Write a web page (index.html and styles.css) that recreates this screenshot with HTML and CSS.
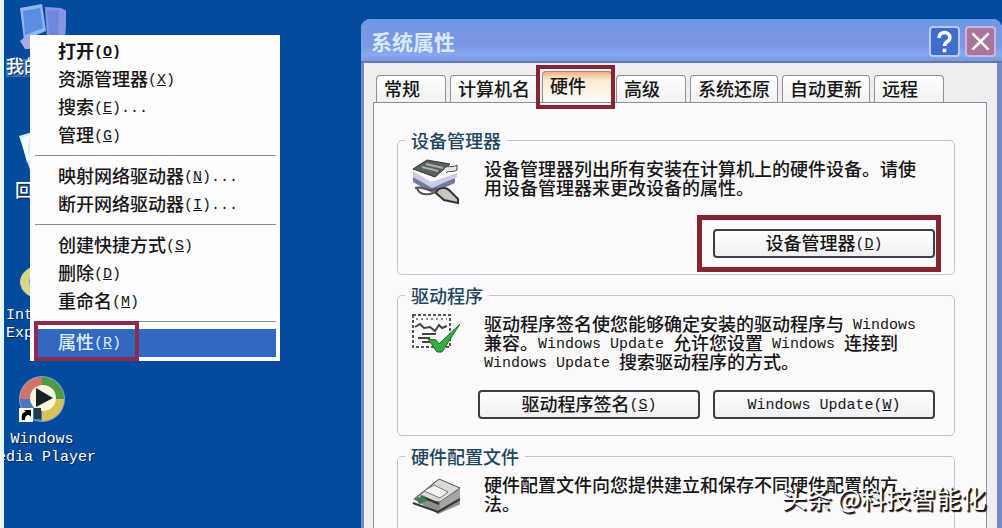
FILE: index.html
```
<!DOCTYPE html>
<html lang="zh-CN">
<head>
  <meta charset="UTF-8" />
  <meta name="viewport" content="width=device-width, initial-scale=1.0" />
  <title>系统属性</title>
  <link rel="stylesheet" href="styles.css">
</head>
<body>
<div class="desktop">
  <div class="icons">
    <div class="icon">
      <svg viewBox="0 0 48 48">
        <path d="M2 5 24 1l4 27-22 9z" fill="#8fb6f4"/>
        <path d="M5 8 22 5l3 20-18 7z" fill="#5a8ce0"/>
        <path d="M27 4l16 1 6 3-2 28-18-1z" fill="#8a94e4"/>
        <path d="M29 7l12 1-1 25-9-1z" fill="#6f86dd"/>
        <path d="M2 38l8-7 30 3-5 12-28 0z" fill="#a8a9e6"/>
      </svg>
      <span class="label active">我的电脑</span>
    </div>
    <div class="icon">
      <svg viewBox="0 0 48 48">
        <path d="M1 9l10-3 30 2-6 36-22 2z" fill="#cfeaf0"/>
        <path d="M3 11l9-3-2 12 2 12-3 4z" fill="#f4fdfd"/>
      </svg>
      <span class="label">回收站</span>
    </div>
    <div class="icon">
      <svg viewBox="0 0 48 48">
        <ellipse cx="24" cy="31" rx="22" ry="17" fill="#d8d68a"/>
        <ellipse cx="26" cy="31" rx="15" ry="11" fill="#5fa0df"/>
      </svg>
      <span class="label">Internet<br>Explorer</span>
    </div>
    <div class="icon">
      <svg viewBox="0 0 48 48">
        <circle cx="24" cy="24" r="23" fill="#7fa6c9"/>
        <path d="M24 24V2A22 22 0 0 0 2 24z" fill="#cf7468"/>
        <path d="M24 24h22A22 22 0 0 0 24 2z" fill="#4f9a45"/>
        <path d="M24 24v22a22 22 0 0 0 22-22z" fill="#d9c257"/>
        <path d="M24 24H2a22 22 0 0 0 22 22z" fill="#4f77b8"/>
        <circle cx="25" cy="23" r="13" fill="#f8f5dc"/>
        <path d="M18 13v19l17-9z" fill="#15202a"/>
        <path d="M16 33h7v11h-7z" fill="#26384a"/>
        <path d="M1 33h14v14H1z" fill="#fff"/>
        <path d="M4 45c-1-6 1-8 4-8l-2-2h7v7l-2-2c-3 0-4 2-4 5z" fill="#000"/>
      </svg>
      <span class="label">Windows<br>Media Player</span>
    </div>
  </div>

  <div class="menu" role="menu">
    <button class="item default" role="menuitem">打开<span class="key">(<u>O</u>)</span></button>
    <button class="item" role="menuitem">资源管理器<span class="key">(<u>X</u>)</span></button>
    <button class="item" role="menuitem">搜索<span class="key">(<u>E</u>)...</span></button>
    <button class="item" role="menuitem">管理<span class="key">(<u>G</u>)</span></button>
    <hr>
    <button class="item" role="menuitem">映射网络驱动器<span class="key">(<u>N</u>)...</span></button>
    <button class="item" role="menuitem">断开网络驱动器<span class="key">(<u>I</u>)...</span></button>
    <hr>
    <button class="item" role="menuitem">创建快捷方式<span class="key">(<u>S</u>)</span></button>
    <button class="item" role="menuitem">删除<span class="key">(<u>D</u>)</span></button>
    <button class="item" role="menuitem">重命名<span class="key">(<u>M</u>)</span></button>
    <hr>
    <button class="item selected" role="menuitem">属性<span class="key">(<u>R</u>)</span></button>
  </div>

  <div class="window">
    <div class="titlebar">
      <h1>系统属性</h1>
      <button class="caption help" aria-label="帮助">
        <svg viewBox="0 0 30 30"><path d="M9 11c0-8 12-8 12 0 0 4-6 4-6 9" fill="none" stroke="#fff" stroke-width="4"/><path d="M13 23h4v4h-4z" fill="#fff"/></svg>
      </button>
      <button class="caption close" aria-label="关闭">
        <svg viewBox="0 0 30 30"><path d="M6 6l18 18M24 6L6 24" stroke="#fff" stroke-width="3"/></svg>
      </button>
    </div>

    <div class="tabs" role="tablist">
      <button class="tab" role="tab">常规</button>
      <button class="tab" role="tab">计算机名</button>
      <button class="tab current" role="tab" aria-selected="true">硬件</button>
      <button class="tab" role="tab">高级</button>
      <button class="tab" role="tab">系统还原</button>
      <button class="tab" role="tab">自动更新</button>
      <button class="tab" role="tab">远程</button>
    </div>

    <div class="pane" role="tabpanel">
      <fieldset class="manager">
        <legend>设备管理器</legend>
        <div class="info">
          <svg viewBox="0 0 48 48">
            <path d="M1 15l18 12 24-8v5L20 34 1 23z" fill="#75799f"/>
            <path d="M1 12l18 11 26-9v4L20 29 1 18z" fill="#c9cde8"/>
            <path d="M1 10 15 1l23 4-15 13z" fill="#59615f" stroke="#333"/>
            <path d="M14 5l17 4M10 8l16 4" stroke="#a9b2ad" stroke-width="2"/>
            <path d="M32 10c3-5 7 0 13-4v5c-5 3-8 0-11 3" fill="#e8e8e8" stroke="#444"/>
            <path d="M3 29c8-3 14 6 22 0M5 29c2 8 14 8 22 2" fill="none" stroke="#555" stroke-width="2"/>
            <path d="M24 34c2-6 10-6 13-3l9 9v4l-14-3z" fill="#c4c8bd" stroke="#333" stroke-width="2"/>
          </svg>
          <p>设备管理器列出所有安装在计算机上的硬件设备。请使<br>用设备管理器来更改设备的属性。</p>
        </div>
        <div class="actions">
          <button class="btn marked">设备管理器<span class="key">(<u>D</u>)</span></button>
        </div>
      </fieldset>

      <fieldset>
        <legend>驱动程序</legend>
        <div class="info">
          <svg viewBox="0 0 48 48">
            <path d="M1 1h37v32H1z" fill="#fafafa" stroke="#555" stroke-width="2" stroke-dasharray="3 2"/>
            <path d="M4 5h31" stroke="#888" stroke-width="2" stroke-dasharray="2 3"/>
            <path d="M3 13l5-3 4 4 6-1 5 4 4-6 3 3 5-2" fill="none" stroke="#444" stroke-width="2"/>
            <path d="M10 20h14M6 24h12M10 28h10" stroke="#444" stroke-width="2"/>
            <path d="M16 25l8 1 3 4L48 10 30 38h-5z" fill="#39ad46" stroke="#176b27"/>
          </svg>
          <p>驱动程序签名使您能够确定安装的驱动程序与<span class="key"> Windows</span><br>兼容。<span class="key">Windows Update </span>允许您设置<span class="key"> Windows </span>连接到<br><span class="key">Windows Update </span>搜索驱动程序的方式。</p>
        </div>
        <div class="actions">
          <button class="btn">驱动程序签名<span class="key">(<u>S</u>)</span></button>
          <button class="btn"><span class="key">Windows Update(<u>W</u>)</span></button>
        </div>
      </fieldset>

      <fieldset>
        <legend>硬件配置文件</legend>
        <div class="info">
          <svg viewBox="0 0 48 48">
            <path d="M1 24 25 5l24 8v16L26 39z" fill="#8c908b"/>
            <path d="M3 24 27 4l21 9-20 14z" fill="#d9dcd5" stroke="#555"/>
            <path d="M12 16l16 7 8-6-14-7z" fill="#f4f4ee" stroke="#777"/>
            <path d="M9 21l18 8M1 28l25 9 22-13" stroke="#333" stroke-width="2" fill="none"/>
            <path d="M28 27l20-13v8L28 34z" fill="#a3a7a0"/>
            <path d="M4 23l8-2 3 5-8 3z" fill="#3f7d5c"/>
          </svg>
          <p>硬件配置文件向您提供建立和保存不同硬件配置的方<br>法。</p>
        </div>
      </fieldset>
    </div>
  </div>

  <div class="watermark">头条 @科技智能化</div>
</div>
</body>
</html>
```
FILE: styles.css
```
*,
*::after {
  box-sizing: border-box;
}

body {
  margin: 0;
  font-family: "Noto Sans CJK SC", sans-serif;
  font-size: 18px;
  font-weight: 500;
  color: #151515;
}

button {
  font: inherit;
  color: inherit;
  cursor: pointer;
}

.key {
  font-family: "Liberation Mono", monospace;
  font-size: 15px;
  line-height: 0;
  vertical-align: 2px;
}

.desktop {
  position: relative;
  display: grid;
  grid-template-columns: 357px 1fr;
  height: 100vh;
  overflow: hidden;
  background: #044b9d;
  border-left: 4px solid #e6f7fb;
}

/* desktop icons */
.icons {
  display: grid;
  grid-template-columns: 76px;
  grid-auto-rows: 124px;
  align-content: start;
  padding-top: 3px;
}

.icon {
  display: flex;
  flex-direction: column;
  align-items: center;
  gap: 8px;
}

.icon svg {
  width: 48px;
  height: 48px;
  flex: none;
}

.label {
  font-family: "Liberation Mono", "Noto Sans CJK SC", monospace;
  font-size: 15px;
  line-height: 18px;
  white-space: nowrap;
  text-align: center;
  color: #fff;
  text-shadow: 1px 1px 1px #00214d;
}

.icon:nth-child(-n+2) .label {
  font-size: 18px;
}

.label.active {
  background: #2f77b5;
}

/* context menu */
.menu {
  position: absolute;
  top: 35px;
  left: 26px;
  width: 250px;
  padding: 3px 4px 4px 8px;
  background: #fdfcfe;
}

.item {
  display: block;
  width: 100%;
  height: 28px;
  padding: 0 20px 3px;
  border: 0;
  background: none;
  line-height: 25px;
  text-align: left;
  white-space: nowrap;
}

.item.default {
  font-weight: 700;
}

.item.selected {
  position: relative;
  background: #3168c0;
  color: #dceeff;
}

.item.selected::after {
  content: "";
  position: absolute;
  inset: -8px auto -4px -4px;
  width: 105px;
  border: 4px solid #8c2a50;
}

.menu hr {
  height: 1px;
  margin: 5px 0 7px -3px;
  border: 0;
  background: #8f8a8c;
}

/* system properties window */
.window {
  display: flex;
  flex-direction: column;
  grid-column: 2;
  margin-top: 19px;
  border: solid #7089c9;
  border-width: 0 5px 0 3px;
  border-radius: 9px 9px 0 0;
  background: #eeeef0;
}

.icons,
.window {
  grid-row: 1;
}

.titlebar {
  display: flex;
  align-items: center;
  gap: 5px;
  height: 44px;
  margin: 0 -5px 0 -3px;
  padding: 2px 6px 0 10px;
  border-bottom: 2px solid #6078c4;
  border-radius: 9px 9px 0 0;
  background: linear-gradient(#6a9ae8, #7896e2 25%, #7b9ae6 65%, #85aaf0 85%, #7a96dc);
}

.titlebar h1 {
  flex: 1;
  margin: 0;
  font-size: 21px;
  font-weight: 700;
  line-height: 28px;
  color: #d8eafc;
}

.caption {
  width: 31px;
  height: 31px;
  padding: 0;
  border: 2px solid #b4ccf5;
  border-radius: 4px;
}

.caption svg {
  display: block;
  width: 100%;
}

.help {
  background: #426ccb;
}

.close {
  background: #a9759c;
  border-color: #c9b6dd;
}

.tabs {
  display: flex;
  align-items: flex-end;
  gap: 4px;
  height: 39px;
  padding: 0 12px;
}

.tab {
  min-width: 70px;
  height: 27px;
  padding: 0 7px 2px;
  border: 1px solid #8d9296;
  border-bottom: 0;
  border-radius: 4px 4px 0 0;
  background: linear-gradient(#fff, #f1f1f2);
  line-height: 24px;
  text-align: left;
  white-space: nowrap;
}

.tab.current {
  position: relative;
  height: 31px;
  padding-bottom: 5px;
  background: linear-gradient(#f3b283, #fdebd2 8px, #fdfbfa);
}

.tab.current::after {
  content: "";
  position: absolute;
  inset: -7px -4px -7px -7px;
  border: 4px solid #86252f;
}

.pane {
  flex: 1;
  margin: 0 10px 0 9px;
  padding: 28px 31px 30px 23px;
  border: 1px solid #8d9296;
  background: #fcfafc;
}

fieldset {
  min-width: 0;
  margin: 0 0 11px;
  padding: 10px 19px 16px 7px;
  border: 1px solid #c6c6ca;
  border-radius: 5px;
}

legend {
  padding: 0 6px;
  line-height: 18px;
  color: #1d4660;
}

.info {
  display: flex;
  gap: 24px;
  padding-left: 7px;
}

.info svg {
  flex: none;
  width: 48px;
  height: 48px;
}

.info p {
  margin: 0;
  line-height: 19px;
  white-space: nowrap;
}

.actions {
  display: flex;
  justify-content: flex-end;
  gap: 13px;
  margin-top: 19px;
}

.manager .actions {
  margin-top: 22px;
}

.btn {
  width: 222px;
  height: 29px;
  padding: 0 0 3px;
  border: 2px solid #3b3e46;
  border-radius: 4px;
  background: linear-gradient(#fff, #f0eff2);
  line-height: 22px;
}

.btn.marked {
  position: relative;
}

.btn.marked::after {
  content: "";
  position: absolute;
  inset: -16px -8px -16px -18px;
  border: 5px solid #86252f;
}

.watermark {
  position: absolute;
  right: 16px;
  bottom: 13px;
  font-size: 25px;
  font-weight: 400;
  line-height: 36px;
  color: #fff;
  text-shadow: 1px 1px 0 #111, 2px 2px 1px #111;
}
```
